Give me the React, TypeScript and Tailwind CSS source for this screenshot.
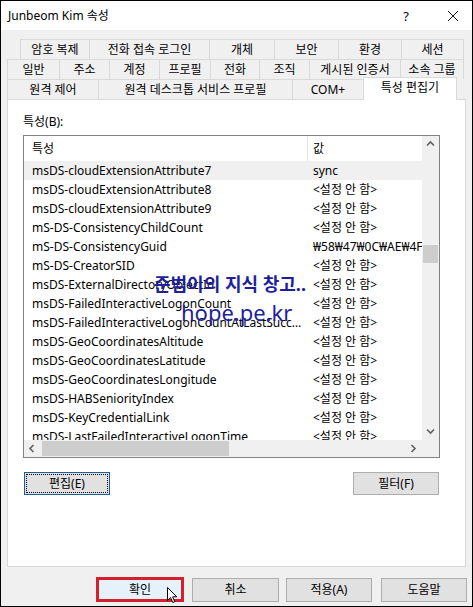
import React from "react";

const row1 = [
  { l: "암호 복제", w: "w-[69px]" },
  { l: "전화 접속 로그인", w: "w-[120px]" },
  { l: "개체", w: "w-[65px]" },
  { l: "보안", w: "w-[64px]" },
  { l: "환경", w: "w-[63px]" },
  { l: "세션", w: "w-[63px] border-r" },
];
const row2 = [
  { l: "일반", w: "w-[52px]" },
  { l: "주소", w: "w-[50px]" },
  { l: "계정", w: "w-[50px]" },
  { l: "프로필", w: "w-[51px]" },
  { l: "전화", w: "w-[49px]" },
  { l: "조직", w: "w-[50px]" },
  { l: "게시된 인증서", w: "w-[91px]" },
  { l: "소속 그룹", w: "w-[64px] border-r" },
];
const row3 = [
  { l: "원격 제어", w: "w-[91px]" },
  { l: "원격 데스크톱 서비스 프로필", w: "w-[194px]" },
  { l: "COM+", w: "w-[71px]" },
];

const NS = "<설정 안 함>";
const rows: [string, string][] = [
  ["msDS-cloudExtensionAttribute7", "sync"],
  ["msDS-cloudExtensionAttribute8", NS],
  ["msDS-cloudExtensionAttribute9", NS],
  ["mS-DS-ConsistencyChildCount", NS],
  ["mS-DS-ConsistencyGuid", "₩58₩47₩0C₩AE₩4F₩21₩9B₩3D"],
  ["mS-DS-CreatorSID", NS],
  ["msDS-ExternalDirectoryObjectId", NS],
  ["msDS-FailedInteractiveLogonCount", NS],
  ["msDS-FailedInteractiveLogonCountAtLastSuccessfulLogon", NS],
  ["msDS-GeoCoordinatesAltitude", NS],
  ["msDS-GeoCoordinatesLatitude", NS],
  ["msDS-GeoCoordinatesLongitude", NS],
  ["msDS-HABSeniorityIndex", NS],
  ["msDS-KeyCredentialLink", NS],
  ["msDS-LastFailedInteractiveLogonTime", NS],
  ["msDS-LastKnownRDN", NS],
];

function Chevron({ dir }: { dir: "up" | "down" | "left" | "right" }) {
  const pts =
    dir === "up"
      ? "1,5.5 4.5,2 8,5.5"
      : dir === "down"
      ? "1,2.5 4.5,6 8,2.5"
      : dir === "left"
      ? "5.5,1 2,4.5 5.5,8"
      : "2.5,1 6,4.5 2.5,8";
  return (
    <svg width="9" height="9" viewBox="0 0 9 9">
      <polyline points={pts} fill="none" stroke="#606060" strokeWidth="1.6" />
    </svg>
  );
}

function Tab({ l, w }: { l: string; w: string }) {
  return (
    <div
      className={`h-[20px] border-t border-l border-[#d9d9d9] flex items-center justify-center text-[12px] leading-[16px] whitespace-nowrap ${w}`}
    >
      {l}
    </div>
  );
}

export default function App() {
  return (
    <div className="relative w-[473px] h-[607px] border border-black bg-[#f0f0f0] flex flex-col overflow-hidden text-black font-['Noto_Sans','Noto_Sans_CJK_KR',sans-serif]">
      {/* title bar */}
      <div className="h-[29px] bg-white flex items-center pl-[7px] shrink-0">
        <span className="text-[12px] leading-[16px]">Junbeom Kim 속성</span>
        <span className="ml-auto mr-[38px] text-[13px] leading-[16px]">?</span>
        <svg width="12" height="12" viewBox="0 0 12 12" className="mr-[13px]">
          <path d="M1 1 L11 11 M11 1 L1 11" stroke="#111" strokeWidth="1" />
        </svg>
      </div>

      <div className="flex-1 flex flex-col px-[6px] pt-[9px]">
        {/* tabs */}
        <div className="flex pl-[13px]">
          {row1.map((t) => (
            <Tab key={t.l} {...t} />
          ))}
        </div>
        <div className="flex">
          {row2.map((t) => (
            <Tab key={t.l} {...t} />
          ))}
        </div>
        <div className="flex h-[20px] items-start">
          {row3.map((t) => (
            <Tab key={t.l} {...t} />
          ))}
          <div className="relative z-10 -mt-[2px] h-[23px] w-[94px] bg-white border-t border-l border-r border-[#d9d9d9] flex items-start justify-center pt-[2px] text-[12px] leading-[16px] whitespace-nowrap">
            특성 편집기
          </div>
        </div>

        {/* panel */}
        <div className="h-[468px] bg-white border border-[#d9d9d9] flex flex-col pl-[15px] pt-[14px]">
          <div className="h-[16px] text-[12px] leading-[16px]">특성(B):</div>
          <div className="mt-[5px] w-[417px] h-[323px] border border-[#828282] flex flex-col">
            <div className="flex flex-1 min-h-0">
              <div className="flex-1 min-w-0 overflow-hidden flex flex-col">
                {/* header */}
                <div className="h-[25px] flex shrink-0 text-[12px] leading-[25px]">
                  <div className="w-[283px] pl-[8px]">특성</div>
                  <div className="w-px bg-[#e5e5e5]" />
                  <div className="pl-[5px]">값</div>
                </div>
                {rows.map(([n, v], i) => (
                  <div
                    key={n}
                    className={`h-[19px] shrink-0 flex text-[12px] leading-[19px] whitespace-nowrap ${
                      i === 0 ? "bg-[#f0f0f0]" : ""
                    }`}
                  >
                    <div className="w-[284px] shrink-0 pl-[8px] pr-[4px] overflow-hidden text-ellipsis">{n}</div>
                    <div className="pl-[5px]">{v}</div>
                  </div>
                ))}
              </div>
              {/* vertical scrollbar */}
              <div className="w-[17px] bg-[#f0f0f0] flex flex-col shrink-0">
                <div className="h-[17px] flex items-center justify-center">
                  <Chevron dir="up" />
                </div>
                <div className="flex-1">
                  <div className="mt-[92px] h-[18px] mx-px bg-[#cdcdcd]" />
                </div>
                <div className="h-[17px] flex items-center justify-center">
                  <Chevron dir="down" />
                </div>
              </div>
            </div>
            {/* horizontal scrollbar */}
            <div className="h-[17px] flex shrink-0">
              <div className="flex-1 bg-[#f0f0f0] flex items-center">
                <div className="w-[17px] h-[17px] flex items-center justify-center">
                  <Chevron dir="left" />
                </div>
                <div className="ml-px w-[187px] h-[15px] bg-[#cdcdcd]" />
                <div className="ml-auto w-[17px] h-[17px] flex items-center justify-center">
                  <Chevron dir="right" />
                </div>
              </div>
              <div className="w-[17px] bg-[#f0f0f0]" />
            </div>
          </div>

          <div className="mt-[14px] w-[417px] flex justify-between px-px">
            <div className="w-[86px] h-[23px] bg-[#e1e1e1] border border-[#1e5d96] p-px">
              <div className="w-full h-full border border-dotted border-black flex items-center justify-center text-[12px] leading-[16px]">
                편집(E)
              </div>
            </div>
            <div className="w-[86px] h-[23px] bg-[#e1e1e1] border border-[#adadad] flex items-center justify-center text-[12px] leading-[16px]">
              필터(F)
            </div>
          </div>
        </div>

        {/* bottom buttons */}
        <div className="mt-[11px] mb-[4px] h-[24px] flex justify-end -mr-px">
          <div className="w-[88px] h-[25px] -mt-px bg-[#e5f1fb] border-[3px] border-[#d3202c] flex items-center justify-center text-[12px] leading-[16px]">
            확인
          </div>
          <div className="ml-[8px] w-[87px] h-[24px] bg-[#e1e1e1] border border-[#adadad] flex items-center justify-center text-[12px] leading-[16px]">
            취소
          </div>
          <div className="ml-[7px] w-[86px] h-[24px] bg-[#e1e1e1] border border-[#adadad] flex items-center justify-center text-[12px] leading-[16px]">
            적용(A)
          </div>
          <div className="ml-[9px] w-[86px] h-[24px] bg-[#e1e1e1] border border-[#adadad] flex items-center justify-center text-[12px] leading-[16px]">
            도움말
          </div>
        </div>
      </div>

      {/* watermark */}
      <div className="absolute left-[153px] top-[272px] text-[18px] leading-[22px] font-bold text-[#1f1f9a] whitespace-nowrap">
        준범이의 지식 창고..
      </div>
      <div className="absolute left-[180px] top-[298px] text-[22px] leading-[26px] text-[#1f1f9a] whitespace-nowrap">
        hope.pe.kr
      </div>

      {/* cursor */}
      <svg className="absolute left-[166px] top-[586px]" width="11" height="17" viewBox="0 0 11 17">
        <path d="M0.5 0.5 L0.5 13.5 L3.5 10.5 L5.8 15.5 L7.8 14.6 L5.6 9.8 L9.8 9.8 Z" fill="#fff" stroke="#000" strokeWidth="1" />
      </svg>
    </div>
  );
}
